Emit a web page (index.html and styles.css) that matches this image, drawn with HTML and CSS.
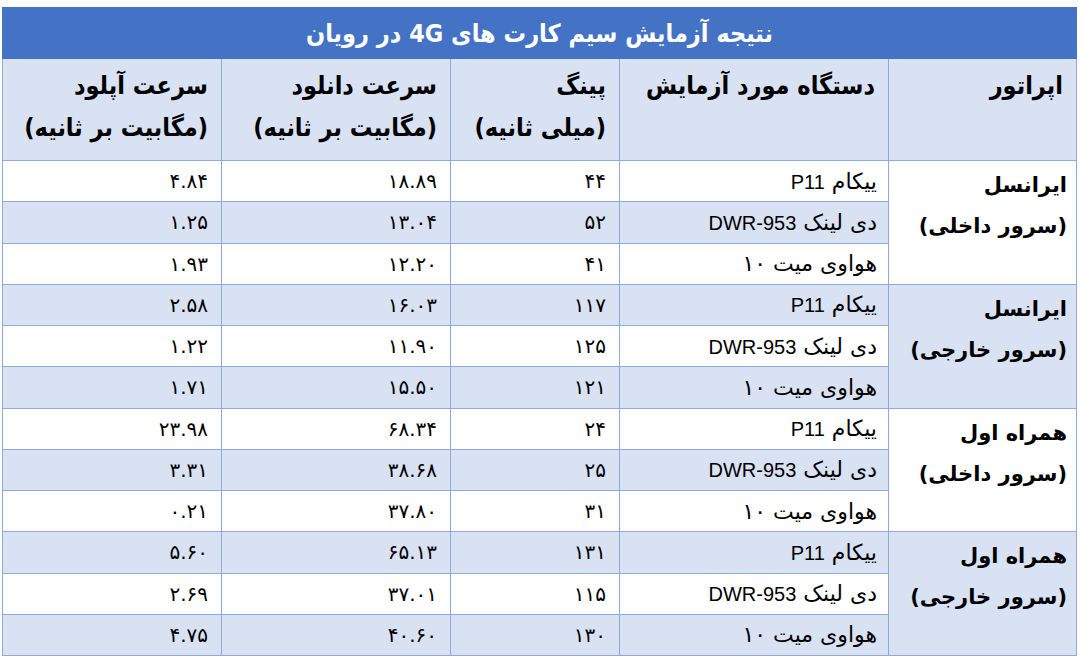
FILE: index.html
```html
<!DOCTYPE html>
<html lang="fa" dir="rtl">
<head>
<meta charset="utf-8">
<title>نتیجه آزمایش سیم کارت های 4G در رویان</title>
<link rel="stylesheet" href="styles.css">
</head>
<body>
<table class="results">
  <colgroup>
    <col class="c-op"><col class="c-dev"><col class="c-ping"><col class="c-dl"><col class="c-ul">
  </colgroup>
  <thead>
    <tr class="title-row"><th colspan="5" class="title">نتیجه آزمایش سیم کارت های 4G در رویان</th></tr>
    <tr class="head-row">
      <th>اپراتور</th>
      <th>دستگاه مورد آزمایش</th>
      <th>پینگ<br>(میلی ثانیه)</th>
      <th>سرعت دانلود<br>(مگابیت بر ثانیه)</th>
      <th>سرعت آپلود<br>(مگابیت بر ثانیه)</th>
    </tr>
  </thead>
  <tbody>
    <tr class="odd"><td rowspan="3" class="op">ایرانسل<br>(سرور داخلی)</td><td class="dev">ییکام <span class="en">P11</span></td><td class="num">۴۴</td><td class="num">۱۸.۸۹</td><td class="num">۴.۸۴</td></tr>
    <tr class="even"><td class="dev">دی لینک <span class="en">DWR-953</span></td><td class="num">۵۲</td><td class="num">۱۳.۰۴</td><td class="num">۱.۲۵</td></tr>
    <tr class="odd"><td class="dev">هواوی میت ۱۰</td><td class="num">۴۱</td><td class="num">۱۲.۲۰</td><td class="num">۱.۹۳</td></tr>

    <tr class="even"><td rowspan="3" class="op shaded">ایرانسل<br>(سرور خارجی)</td><td class="dev">ییکام <span class="en">P11</span></td><td class="num">۱۱۷</td><td class="num">۱۶.۰۳</td><td class="num">۲.۵۸</td></tr>
    <tr class="odd"><td class="dev">دی لینک <span class="en">DWR-953</span></td><td class="num">۱۲۵</td><td class="num">۱۱.۹۰</td><td class="num">۱.۲۲</td></tr>
    <tr class="even"><td class="dev">هواوی میت ۱۰</td><td class="num">۱۲۱</td><td class="num">۱۵.۵۰</td><td class="num">۱.۷۱</td></tr>

    <tr class="odd"><td rowspan="3" class="op">همراه اول<br>(سرور داخلی)</td><td class="dev">ییکام <span class="en">P11</span></td><td class="num">۲۴</td><td class="num">۶۸.۳۴</td><td class="num">۲۳.۹۸</td></tr>
    <tr class="even"><td class="dev">دی لینک <span class="en">DWR-953</span></td><td class="num">۲۵</td><td class="num">۳۸.۶۸</td><td class="num">۳.۳۱</td></tr>
    <tr class="odd"><td class="dev">هواوی میت ۱۰</td><td class="num">۳۱</td><td class="num">۳۷.۸۰</td><td class="num">۰.۲۱</td></tr>

    <tr class="even"><td rowspan="3" class="op shaded">همراه اول<br>(سرور خارجی)</td><td class="dev">ییکام <span class="en">P11</span></td><td class="num">۱۳۱</td><td class="num">۶۵.۱۳</td><td class="num">۵.۶۰</td></tr>
    <tr class="odd"><td class="dev">دی لینک <span class="en">DWR-953</span></td><td class="num">۱۱۵</td><td class="num">۳۷.۰۱</td><td class="num">۲.۶۹</td></tr>
    <tr class="even"><td class="dev">هواوی میت ۱۰</td><td class="num">۱۳۰</td><td class="num">۴۰.۶۰</td><td class="num">۴.۷۵</td></tr>
  </tbody>
</table>
</body>
</html>
```

FILE: styles.css
```css
html, body {
  margin: 0;
  background: #ffffff;
}
body {
  padding: 7px 7px 0 3px;
  font-family: "Liberation Sans", "DejaVu Sans", sans-serif;
  color: #000000;
}
.results {
  border-collapse: collapse;
  table-layout: fixed;
  width: 1074px;
  direction: rtl;
}
.c-op { width: 188px; }
.c-dev { width: 269px; }
.c-ping { width: 169px; }
.c-dl { width: 229px; }
.c-ul { width: 219px; }

.results th,
.results td {
  border: 1px solid #8eaadb;
  padding: 0 11px 0 6px;
  text-align: right;
}
.title-row { height: 51px; }
.results th.title {
  background: #4472c4;
  border-color: #4472c4;
  color: #ffffff;
  text-align: center;
  font-family: "DejaVu Sans Condensed", "DejaVu Sans", sans-serif;
  font-weight: bold;
  font-size: 25px;
  padding: 0;
  vertical-align: middle;
}
.head-row { height: 102px; }
.head-row th {
  background: #d9e2f3;
  font-family: "DejaVu Sans Condensed", "DejaVu Sans", sans-serif;
  font-weight: bold;
  font-size: 25px;
  line-height: 42px;
  vertical-align: top;
  padding-top: 6px;
  padding-right: 13px;
}
tbody tr { height: 41.25px; }
tbody td {
  font-size: 20px;
  vertical-align: middle;
  white-space: nowrap;
}
tr.odd td { background: #ffffff; }
tr.even td { background: #d9e2f3; }
.results td.op {
  background: #ffffff;
  vertical-align: top;
  font-family: "DejaVu Sans", sans-serif;
  font-weight: bold;
  font-size: 21px;
  line-height: 41px;
  padding-top: 4px;
  padding-right: 9px;
}
.results td.op.shaded { background: #d9e2f3; }
.results td.dev {
  font-family: "DejaVu Sans", sans-serif;
  font-size: 22px;
  padding-right: 11px;
}
.dev .en {
  font-family: "Liberation Sans", sans-serif;
  font-size: 20px;
}
.results td.num {
  font-family: "DejaVu Sans", sans-serif;
  font-size: 20px;
  padding-right: 13px;
}
```
